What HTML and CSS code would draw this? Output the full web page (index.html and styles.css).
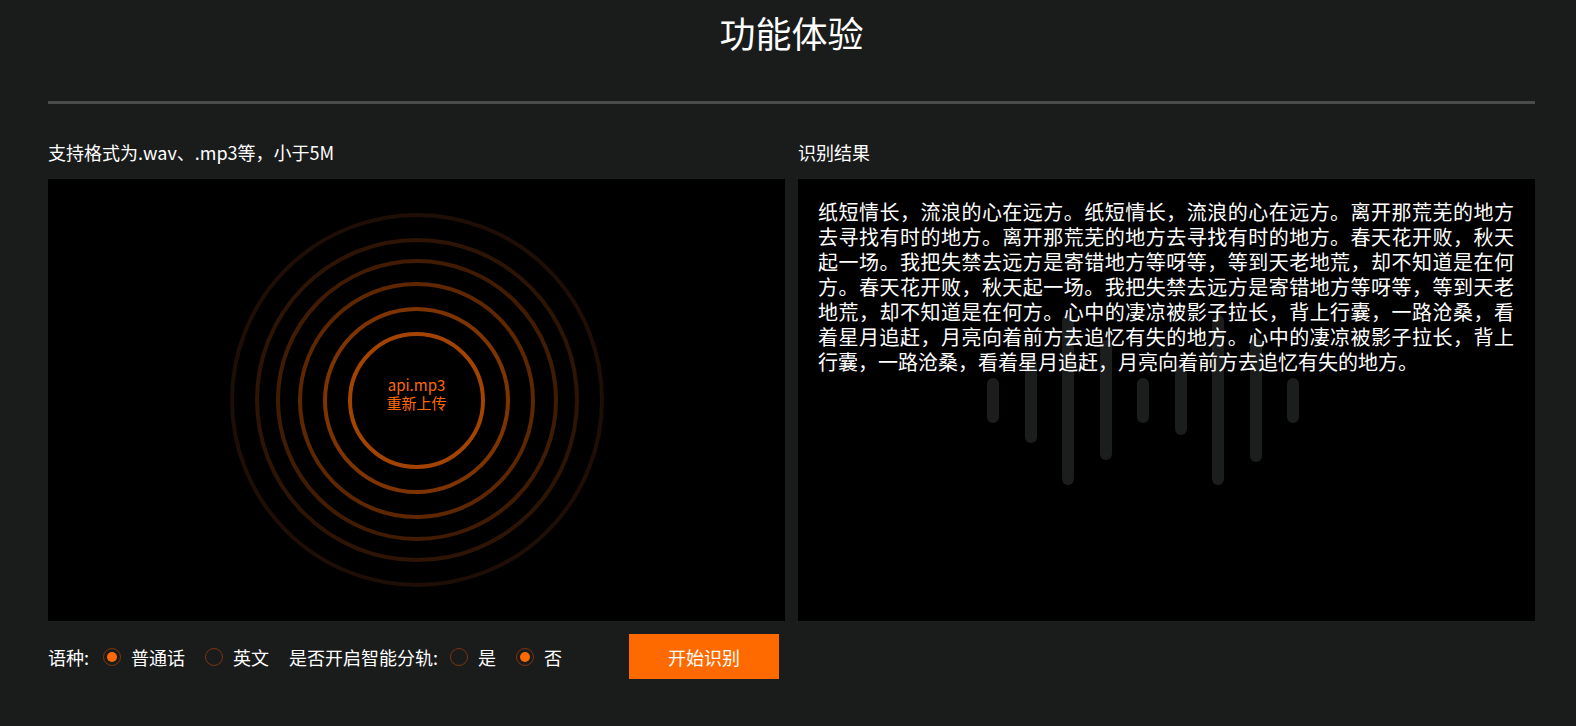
FILE: index.html
```html
<!DOCTYPE html>
<html lang="zh-CN">
<head>
<meta charset="utf-8">
<title>功能体验</title>
<link rel="stylesheet" href="styles.css">
</head>
<body>
<div class="page">
  <header class="header">
    <h1 class="title">功能体验</h1>
  </header>
  <div class="rule"></div>
  <section class="grid">
    <div class="col">
      <div class="label">支持格式为.wav、.mp3等，小于5M</div>
      <div class="panel upload">
        <div class="ring r6"></div>
        <div class="ring r5"></div>
        <div class="ring r4"></div>
        <div class="ring r3"></div>
        <div class="ring r2"></div>
        <div class="ring r1"></div>
        <div class="file">
          <div class="file-name">api.mp3</div>
          <div class="file-action">重新上传</div>
        </div>
      </div>
      <div class="controls">
        <span class="ctl-label">语种:</span>
        <span class="radio checked"></span><span class="opt">普通话</span>
        <span class="radio"></span><span class="opt">英文</span>
        <span class="ctl-label second">是否开启智能分轨:</span>
        <span class="radio"></span><span class="opt">是</span>
        <span class="radio checked"></span><span class="opt">否</span>
        <button class="start">开始识别</button>
      </div>
    </div>
    <div class="col">
      <div class="label">识别结果</div>
      <div class="panel result">
        <div class="bars">
          <span class="bar" style="height:45px"></span>
          <span class="bar" style="height:86px"></span>
          <span class="bar" style="height:170px"></span>
          <span class="bar" style="height:120px"></span>
          <span class="bar" style="height:45px"></span>
          <span class="bar" style="height:70px"></span>
          <span class="bar" style="height:170px"></span>
          <span class="bar" style="height:124px"></span>
          <span class="bar" style="height:45px"></span>
        </div>
        <p class="text">纸短情长，流浪的心在远方。纸短情长，流浪的心在远方。离开那荒芜的地方去寻找有时的地方。离开那荒芜的地方去寻找有时的地方。春天花开败，秋天起一场。我把失禁去远方是寄错地方等呀等，等到天老地荒，却不知道是在何方。春天花开败，秋天起一场。我把失禁去远方是寄错地方等呀等，等到天老地荒，却不知道是在何方。心中的凄凉被影子拉长，背上行囊，一路沧桑，看着星月追赶，月亮向着前方去追忆有失的地方。心中的凄凉被影子拉长，背上行囊，一路沧桑，看着星月追赶，月亮向着前方去追忆有失的地方。</p>
      </div>
    </div>
  </section>
</div>
</body>
</html>
```
FILE: styles.css
```css
* { box-sizing: border-box; }
html, body {
  margin: 0;
  padding: 0;
  background: #1a1b1b;
  color: #fff;
  font-family: "Noto Sans CJK SC", "Noto Sans", sans-serif;
}
.page {
  width: 1576px;
  height: 726px;
  padding: 0 41px 0 48px;
  overflow: hidden;
}
.header {
  height: 101px;
  padding-top: 14px;
}
.title {
  margin: 0;
  font-size: 36px;
  line-height: 36px;
  font-weight: normal;
  text-align: center;
}
.rule {
  height: 3px;
  background: #4b4b4b;
}
.grid {
  display: grid;
  grid-template-columns: 737px 737px;
  column-gap: 13px;
  margin-top: 39px;
}
.col { display: flex; flex-direction: column; }
.label {
  font-size: 18px;
  line-height: 18px;
  height: 18px;
  margin-bottom: 18px;
}
.panel {
  height: 442px;
  background: #000;
  display: grid;
}
.upload { place-items: center; }
.upload > * { grid-area: 1 / 1; }
.ring {
  border-radius: 50%;
  border: 4px solid #ff6a00;
}
.r1 { width: 137px; height: 137px; border-color: #a24300; }
.r2 { width: 187px; height: 187px; border-color: #7e3400; }
.r3 { width: 237px; height: 237px; border-color: #5e2700; }
.r4 { width: 282px; height: 282px; border-color: #421c02; }
.r5 { width: 324px; height: 324px; border-color: #2e1404; }
.r6 { width: 374px; height: 374px; border-color: #1e0e05; }
.file {
  text-align: center;
  color: #ff6a00;
  font-size: 15px;
  line-height: 18.5px;
  margin-bottom: 12px;
}
.result > * { grid-area: 1 / 1; }
.bars {
  display: flex;
  align-items: center;
  gap: 25.5px;
  margin-left: 189px;
  justify-self: start;
}
.bar {
  width: 12px;
  border-radius: 6px;
  background: #1c1d1d;
}
.text {
  margin: 0;
  padding: 20px 21px 20px 20px;
  font-size: 20px;
  line-height: 25px;
  text-align: justify;
  position: relative;
  align-self: start;
}
.controls {
  display: flex;
  align-items: center;
  height: 45px;
  margin-top: 13px;
  font-size: 18px;
  line-height: 18px;
}
.radio {
  width: 18px;
  height: 18px;
  border-radius: 50%;
  border: 1.5px solid #7a3412;
  margin: 0 10px 0 14px;
  display: grid;
  place-items: center;
  flex: none;
}
.opt + .radio { margin-left: 20px; }
.radio.checked::after {
  content: "";
  width: 10px;
  height: 10px;
  border-radius: 50%;
  background: #ff6a00;
}
.ctl-label.second { margin-left: 20px; }
.ctl-label.second + .radio { margin-left: 12px; }
.start {
  margin-left: auto;
  margin-right: 6px;
  width: 150px;
  height: 45px;
  border: 0;
  background: #ff6a00;
  color: #fff;
  font-family: inherit;
  font-size: 18px;
  cursor: pointer;
}
```
